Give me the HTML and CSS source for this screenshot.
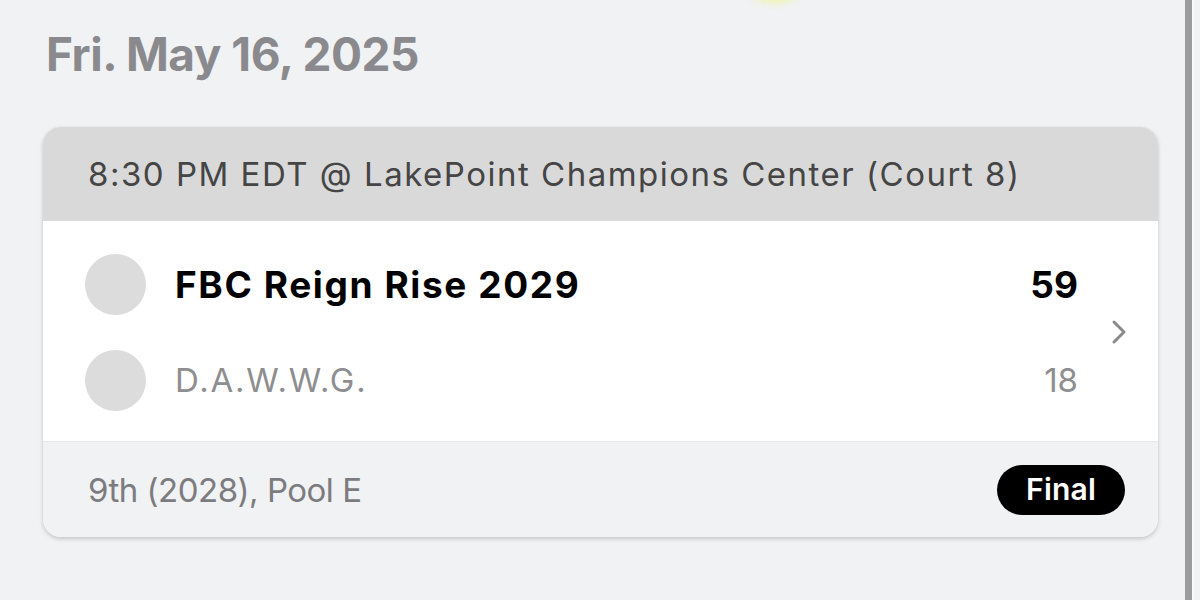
FILE: index.html
```html
<!DOCTYPE html>
<html lang="en">
  <head>
    <meta charset="UTF-8">
    <meta name="viewport" content="width=device-width, initial-scale=1.0">
    <title>Schedule</title>
    <link rel="stylesheet" href="styles.css">
  </head>
  <body>
    <div class="page">
      <div class="glow"></div>
      <h2 class="day-title">Fri. May 16, 2025</h2>

      <div class="game-card">
        <div class="game-header">8:30 PM EDT @ LakePoint Champions Center (Court 8)</div>
        <div class="game-body">
          <div class="teams">
            <div class="team-row winner">
              <span class="team-logo"></span>
              <span class="team-name">FBC Reign Rise 2029</span>
              <span class="team-score">59</span>
            </div>
            <div class="team-row">
              <span class="team-logo"></span>
              <span class="team-name">D.A.W.W.G.</span>
              <span class="team-score">18</span>
            </div>
          </div>
          <svg class="chevron" width="16" height="26" viewBox="0 0 16 26">
            <path d="M3 3 L13 13 L3 23" fill="none" stroke="#8a8a8e" stroke-width="3" stroke-linecap="round" stroke-linejoin="round"/>
          </svg>
        </div>
        <div class="game-footer">
          <span class="bracket">9th (2028), Pool E</span>
          <span class="status">Final</span>
        </div>
      </div>
    </div>
    <div class="edge"></div>
  </body>
</html>
```

FILE: styles.css
```css
body {
  margin: 0;
  display: flex;
  height: 600px;
  overflow: hidden;
  background-color: #f1f2f4;
  font-family: Inter, "Noto Sans", sans-serif;
}

.page {
  position: relative;
  width: 1115px;
  padding: 0 0 0 43px;
}

.glow {
  position: absolute;
  top: -22px;
  left: 745px;
  width: 60px;
  height: 28px;
  border-radius: 50%;
  background: radial-gradient(ellipse at center, rgba(236, 245, 90, 0.9) 0%, rgba(240, 248, 150, 0.5) 45%, rgba(241, 242, 244, 0) 75%);
  filter: blur(3px);
}

.day-title {
  margin: 0;
  padding: 26px 0 0 3px;
  height: 127px;
  box-sizing: border-box;
  font-size: 46px;
  font-weight: 700;
  color: #8a8a8e;
  letter-spacing: -0.5px;
}

.game-card {
  width: 1115px;
  border-radius: 18px;
  overflow: hidden;
  background-color: #fff;
  box-shadow: 0 2px 4px rgba(0, 0, 0, 0.18), 0 0 1px rgba(0, 0, 0, 0.12);
}

.game-header {
  height: 94px;
  display: flex;
  align-items: center;
  padding-left: 45px;
  background-color: #d9d9d9;
  font-size: 33px;
  letter-spacing: 1.5px;
  color: #454545;
}

.game-body {
  display: flex;
  align-items: center;
  height: 220px;
  padding: 0 31px 0 42px;
  border-bottom: 1px solid #e6e6e8;
}

.teams {
  flex: 1;
  padding: 2px 33px 0 0;
}

.team-row {
  display: flex;
  align-items: center;
  height: 96px;
  font-size: 33px;
  color: #8e8e90;
}

.team-logo {
  width: 61px;
  height: 61px;
  border-radius: 50%;
  background-color: #dcdcdc;
  margin-right: 29px;
}

.team-name {
  flex: 1;
  letter-spacing: 1.8px;
}

.winner {
  color: #000;
  font-weight: 700;
  font-size: 37px;
}

.winner .team-name {
  letter-spacing: 1.6px;
}

.chevron {
  margin-top: 2px;
}

.game-footer {
  display: flex;
  align-items: center;
  justify-content: space-between;
  height: 95px;
  padding: 0 33px 0 45px;
  background-color: #f1f2f4;
  font-size: 33px;
  letter-spacing: -0.5px;
  color: #7c7c80;
}

.status {
  background-color: #000;
  color: #fff;
  font-weight: 600;
  font-size: 30px;
  letter-spacing: 0.2px;
  padding: 6px 29px 8px;
  border-radius: 25px;
}

.edge {
  margin-left: 27px;
  width: 7px;
  height: 600px;
  background-color: #9c9c9c;
  border-right: 2px solid #fafafa;
}
```
